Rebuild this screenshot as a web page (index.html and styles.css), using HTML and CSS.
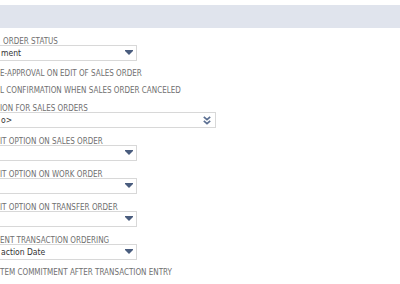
FILE: index.html
```html
<!DOCTYPE html>
<html lang="en">
<head>
    <meta charset="UTF-8">
    <title>Order Management Preferences</title>
    <link rel="stylesheet" href="styles.css">
</head>
<body>
    <div class="band"></div>

    <div class="form">
        <div class="field tight">
            <div class="label lead">ORDER STATUS</div>
            <div class="select">
                <span class="value">ment</span>
                <span class="arrow"></span>
            </div>
        </div>

        <div class="checks">
            <div class="check">E-APPROVAL ON EDIT OF SALES ORDER</div>
            <div class="check">L CONFIRMATION WHEN SALES ORDER CANCELED</div>
        </div>

        <div class="field">
            <div class="label">ION FOR SALES ORDERS</div>
            <div class="select wide">
                <span class="value">o&gt;</span>
                <svg class="chevrons" width="8" height="9" viewBox="0 0 8 9">
                    <path d="M0.8 0.8 L4 3.6 L7.2 0.8 M0.8 4.8 L4 7.6 L7.2 4.8" fill="none" stroke="#5b6f92" stroke-width="1.7"/>
                </svg>
            </div>
        </div>

        <div class="field">
            <div class="label">IT OPTION ON SALES ORDER</div>
            <div class="select">
                <span class="value"></span>
                <span class="arrow"></span>
            </div>
        </div>

        <div class="field">
            <div class="label">IT OPTION ON WORK ORDER</div>
            <div class="select">
                <span class="value"></span>
                <span class="arrow"></span>
            </div>
        </div>

        <div class="field">
            <div class="label">IT OPTION ON TRANSFER ORDER</div>
            <div class="select">
                <span class="value"></span>
                <span class="arrow"></span>
            </div>
        </div>

        <div class="field tight">
            <div class="label">ENT TRANSACTION ORDERING</div>
            <div class="select">
                <span class="value">action Date</span>
                <span class="arrow"></span>
            </div>
        </div>

        <div class="checks">
            <div class="check">TEM COMMITMENT AFTER TRANSACTION ENTRY</div>
        </div>
    </div>
</body>
</html>
```

FILE: styles.css
```css
body {
    margin: 0;
    padding: 0;
    background-color: #fff;
    font-family: "DejaVu Sans Condensed", "DejaVu Sans", sans-serif;
    overflow: hidden;
}

.band {
    margin-top: 5px;
    height: 23px;
    background-color: #e0e4ed;
}

.form {
    padding-top: 9px;
}

.field {
    padding-bottom: 9px;
}

.field.tight {
    padding-bottom: 4px;
}

.label {
    height: 8px;
    line-height: 9px;
    font-size: 8px;
    color: #707070;
    white-space: nowrap;
}

.label.lead {
    padding-left: 3px;
}

.select {
    box-sizing: border-box;
    width: 140px;
    height: 16px;
    margin-left: -3px;
    border: 1px solid #d8d8d8;
    display: flex;
    align-items: center;
    justify-content: space-between;
    padding: 0 3px 0 3px;
}

.select.wide {
    width: 219px;
    padding-right: 4px;
}

.value {
    font-size: 8.5px;
    color: #333;
    white-space: nowrap;
}

.arrow {
    width: 0;
    height: 0;
    border-top: 4px solid #4a5d7e;
    border-left: 4px solid transparent;
    border-right: 4px solid transparent;
    position: relative;
}

.arrow::before {
    content: "";
    position: absolute;
    top: -5px;
    left: -4px;
    width: 8px;
    height: 1px;
    background-color: #4a5d7e;
}

.checks {
    padding-bottom: 5px;
}

.check {
    height: 17px;
    line-height: 17px;
    font-size: 8px;
    color: #707070;
    white-space: nowrap;
}
```
